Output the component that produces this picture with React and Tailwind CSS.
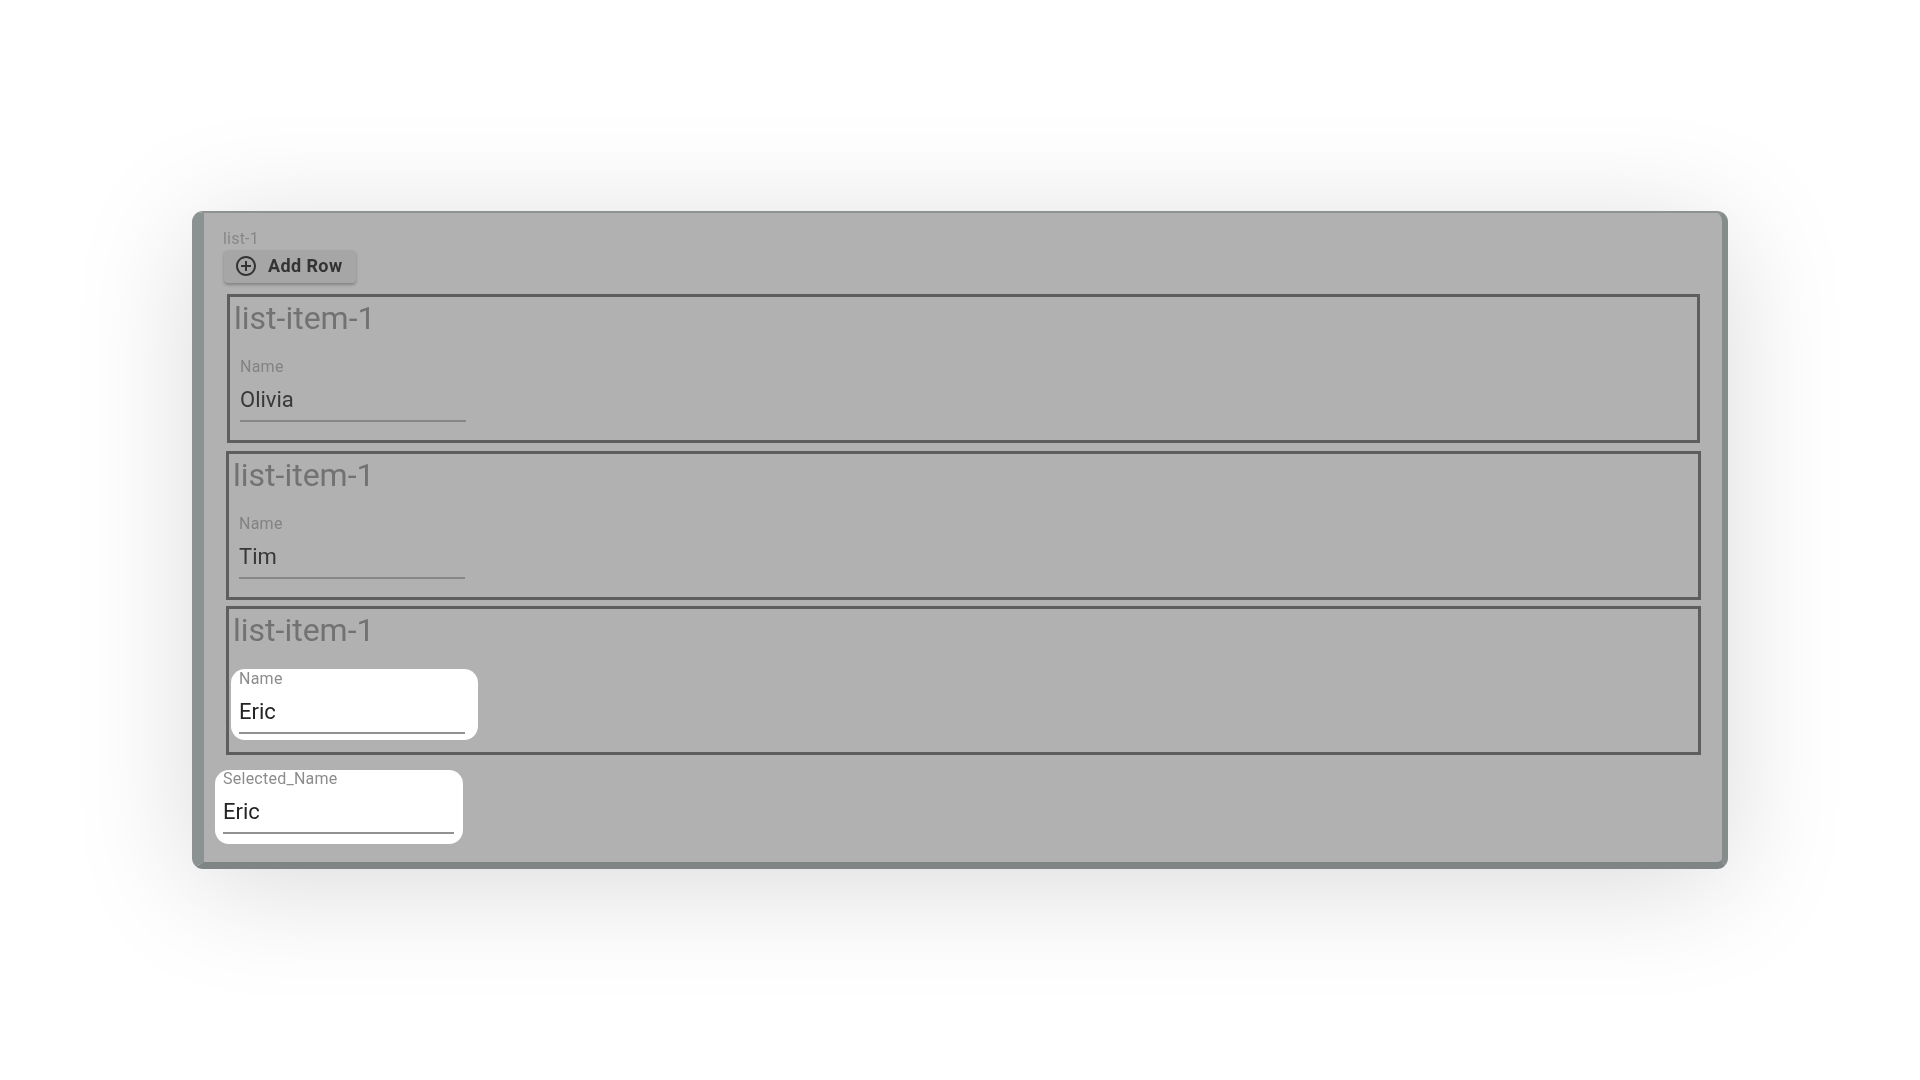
const addCircle = "M13 7h-2v4H7v2h4v4h2v-4h4v-2h-4V7zm-1-5C6.49 2 2 6.49 2 12s4.49 10 10 10 10-4.49 10-10S17.51 2 12 2zm0 18c-4.41 0-8-3.59-8-8s3.59-8 8-8 8 3.59 8 8-3.59 8-8 8z";

function Field({ label, value, highlight, className }) {
  return (
    <div className={`flex flex-col rounded-[14px] ${highlight ? "bg-white" : ""} ${className}`}>
      <span className={`text-[16px] leading-[16px] tracking-[0.25px] ${highlight ? "text-[#8c8c8c]" : "text-[#838383]"}`}>{label}</span>
      <span className={`mt-[13px] text-[22px] leading-[24px] ${highlight ? "text-[#242424]" : "text-[#383838]"}`}>{value}</span>
      <span className={`mt-[8px] h-[2px] ${highlight ? "bg-[#919191]" : "bg-[#878787]"}`} />
    </div>
  );
}

function Item({ value, highlight, className }) {
  return (
    <section className={`flex h-[149px] flex-col border-[3px] border-[#5e5e5e] pl-[4px] pt-[2px] ${className}`}>
      <h2 className="text-[32px] leading-[38px] font-normal text-[#727272]">list-item-1</h2>
      {highlight ? (
        <Field
          label="Name"
          value={value}
          highlight
          className="mt-[20px] w-[247px] pl-[8px] pr-[13px] pt-[2px] pb-[6px] -ml-[2px]"
        />
      ) : (
        <Field label="Name" value={value} className="mt-[22px] w-[226px] ml-[6px]" />
      )}
    </section>
  );
}

export default function App() {
  return (
    <main className="flex h-screen w-full items-center justify-center bg-white font-['Roboto',sans-serif]">
      <div className="flex h-[658px] w-[1536px] flex-col rounded-[11px] border-t-[2px] border-r-[6px] border-b-[7px] border-l-[12px] border-t-[#8d9393] border-r-[#858c8c] border-b-[#7f8585] border-l-[#8a9292] bg-[#b1b1b1] pl-[19px] pr-[21px] pt-[17px] shadow-[0_16px_120px_rgba(0,0,0,0.15)] blur-[0.6px]">
        <span className="text-[16px] leading-[18px] tracking-[0.2px] text-[#878787]">list-1</span>
        <button className="mt-[2px] ml-[1px] flex h-[33px] w-[132px] items-center gap-[10px] rounded-[4px] bg-[#a6a6a6] pb-[2px] pl-[10px] text-[18px] font-bold tracking-[0.4px] text-[#333333] shadow-[0_2px_3px_rgba(0,0,0,0.25)]">
          <svg width="24" height="24" viewBox="0 0 24 24" fill="#333333"><path d={addCircle} /></svg>
          <span>Add Row</span>
        </button>
        <Item value="Olivia" className="mt-[11px] ml-[4px] mr-[1px]" />
        <Item value="Tim" className="mt-[8px] ml-[3px]" />
        <Item value="Eric" highlight className="mt-[6px] ml-[3px]" />
        <Field
          label="Selected_Name"
          value="Eric"
          highlight
          className="mt-[15px] -ml-[8px] w-[248px] pl-[8px] pr-[9px] pt-[1px] pb-[10px]"
        />
      </div>
    </main>
  );
}
